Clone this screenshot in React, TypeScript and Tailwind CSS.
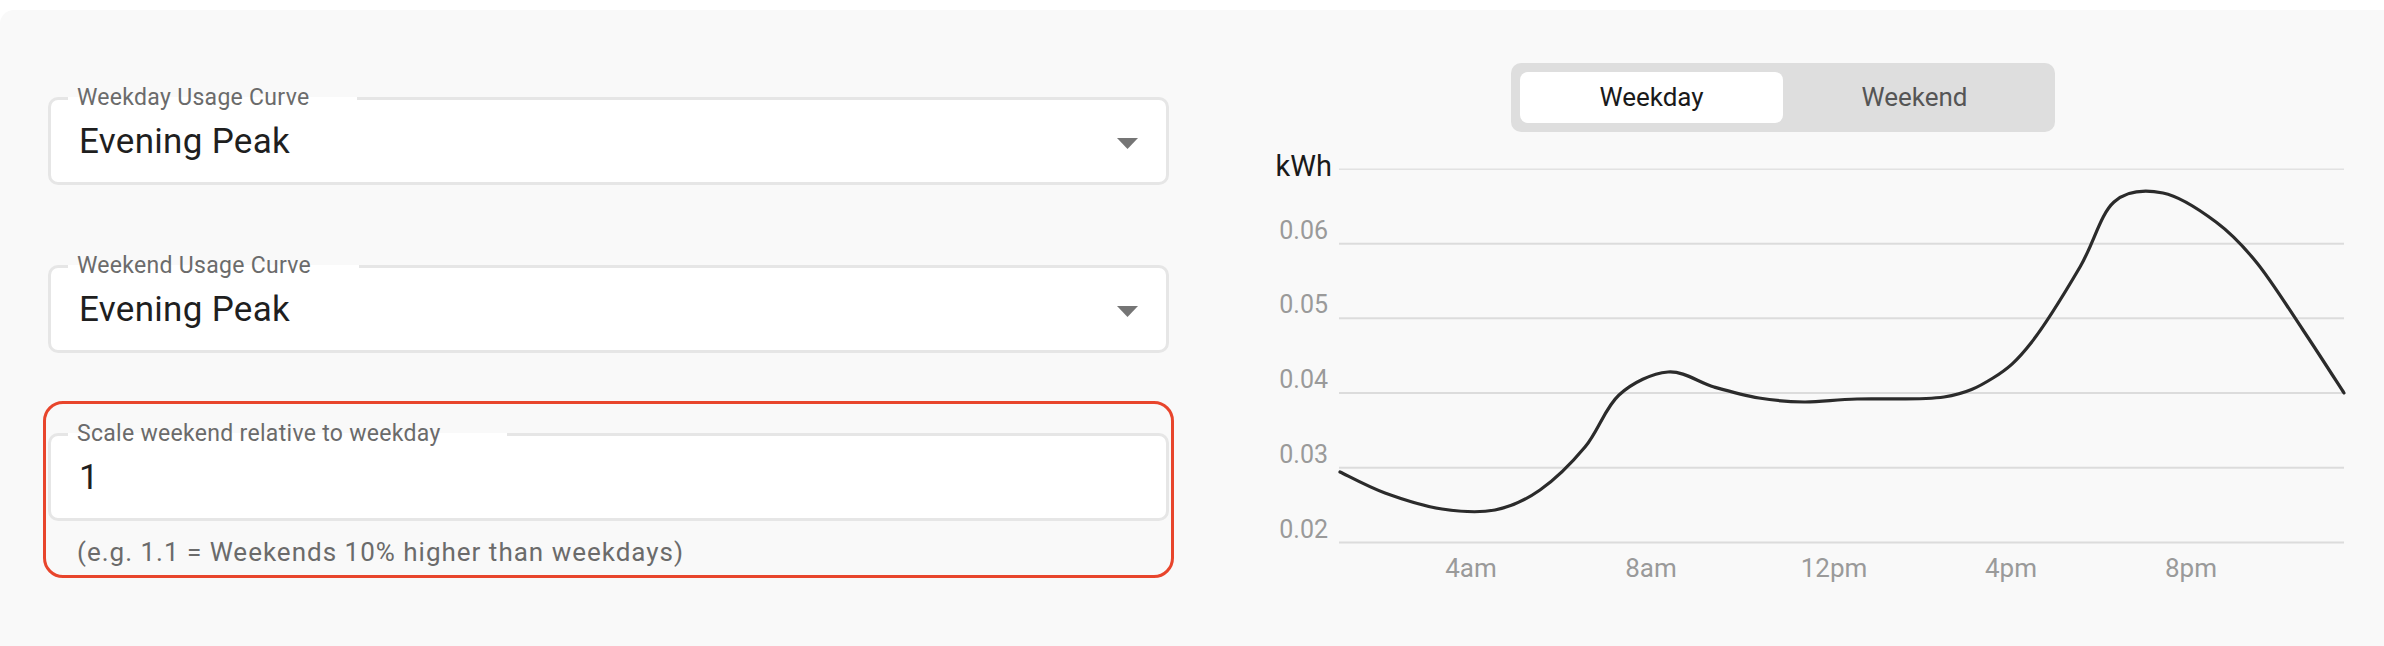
import React from 'react';

const font = { fontFamily: 'Roboto, "Noto Sans", sans-serif' };

// chart svg is placed at x=1222, y=140 of the page
const OX = 1222;
const OY = 140;

const gridYs = [169.3, 243.8, 318.3, 392.9, 467.7, 542.5];
const yLabels = ['kWh', '0.06', '0.05', '0.04', '0.03', '0.02'];
const xTicks = [
  { label: '4am', x: 1471 },
  { label: '8am', x: 1651 },
  { label: '12pm', x: 1834 },
  { label: '4pm', x: 2011 },
  { label: '8pm', x: 2191 },
];

const curve: [number, number][] = [
  [1340, 472], [1385, 493], [1442, 509], [1495, 510],
  [1540, 490], [1585, 447], [1619, 395], [1668, 372], [1714, 387],
  [1759, 398], [1804, 402], [1857, 399], [1944, 397], [1993, 378],
  [2031, 343], [2080, 267], [2114, 202], [2163, 193], [2216, 222],
  [2257, 263], [2303, 330], [2344, 393],
];

function smoothPath(pts: [number, number][]) {
  const p = pts.map(([x, y]) => [x - OX, y - OY]);
  let d = `M${p[0][0]},${p[0][1]}`;
  for (let i = 0; i < p.length - 1; i++) {
    const p0 = p[i - 1] || p[i];
    const p1 = p[i];
    const p2 = p[i + 1];
    const p3 = p[i + 2] || p2;
    const c1x = p1[0] + (p2[0] - p0[0]) / 6;
    const c1y = p1[1] + (p2[1] - p0[1]) / 6;
    const c2x = p2[0] - (p3[0] - p1[0]) / 6;
    const c2y = p2[1] - (p3[1] - p1[1]) / 6;
    d += ` C${c1x.toFixed(1)},${c1y.toFixed(1)} ${c2x.toFixed(1)},${c2y.toFixed(1)} ${p2[0]},${p2[1]}`;
  }
  return d;
}

function Caret() {
  return (
    <svg className="absolute right-[28px] top-[38px]" width="21" height="11" viewBox="0 0 21 11">
      <path d="M0 0 L21 0 L10.5 11 Z" fill="#757575" />
    </svg>
  );
}

function OutlinedField({
  label,
  value,
  notchWidth,
  select,
}: {
  label: string;
  value: string;
  notchWidth: string;
  select?: boolean;
}) {
  return (
    <div className="relative h-[88px] rounded-[10px] border-[3px] border-[#e6e6e6] bg-white flex items-center pl-[28px]">
      {/* notch in the outline behind the label */}
      <div className={`absolute left-[17px] -top-[3px] h-[3px] bg-white ${notchWidth}`} />
      <span className="absolute left-[26px] -top-[14px] text-[23px] leading-none tracking-[0.3px] text-[#6b6b6b] whitespace-nowrap">
        {label}
      </span>
      <span className="text-[35px] leading-none tracking-[0.3px] text-[#1f1f1f]">{value}</span>
      {select && <Caret />}
    </div>
  );
}

function Chart() {
  return (
    <svg width="1162" height="460" className="mt-[8px] block" style={font}>
      {gridYs.map((y, i) => (
        <line
          key={y}
          x1={1339 - OX}
          x2={2344 - OX}
          y1={y - OY}
          y2={y - OY}
          stroke={i === 0 ? '#e2e2e2' : '#dcdcdc'}
          strokeWidth={i === 0 ? 1.5 : 2}
        />
      ))}
      {yLabels.map((t, i) =>
        i === 0 ? (
          <text key={t} x={1332 - OX} y={176 - OY} textAnchor="end" fontSize="29" fill="#1a1a1a">
            {t}
          </text>
        ) : (
          <text key={t} x={1328 - OX} y={gridYs[i] - 5 - OY} textAnchor="end" fontSize="25" fill="#9a9a9a">
            {t}
          </text>
        )
      )}
      {xTicks.map((t) => (
        <text key={t.label} x={t.x - OX} y={577 - OY} textAnchor="middle" fontSize="26" fill="#9a9a9a">
          {t.label}
        </text>
      ))}
      <path d={smoothPath(curve)} fill="none" stroke="#2b2b2b" strokeWidth="3.2" strokeLinejoin="round" strokeLinecap="round" />
    </svg>
  );
}

export default function App() {
  return (
    <div className="w-[2384px] h-[646px] bg-white pt-[10px] overflow-hidden" style={font}>
      <div className="h-[636px] bg-[#f9f9f9] rounded-tl-[14px] flex">
        {/* left column: usage curve inputs */}
        <div className="w-[1222px] pl-[48px] pr-[53px] pt-[87px]">
          <OutlinedField label="Weekday Usage Curve" value="Evening Peak" notchWidth="w-[289px]" select />
          <div className="mt-[80px]">
            <OutlinedField label="Weekend Usage Curve" value="Evening Peak" notchWidth="w-[291px]" select />
          </div>
          <div className="mt-[48px] -mx-[5px] rounded-[20px] border-[3px] border-[#e8452c] px-[2px] pt-[29px] pb-[10px]">
            <OutlinedField label="Scale weekend relative to weekday" value="1" notchWidth="w-[439px]" />
            <p className="mt-[18px] pl-[29px] text-[26px] leading-none tracking-[1px] text-[#6b6b6b]">
              (e.g. 1.1 = Weekends 10% higher than weekdays)
            </p>
          </div>
        </div>

        {/* right column: toggle + chart */}
        <div className="flex-1 flex flex-col">
          <div className="ml-[289px] mt-[53px] w-[544px] h-[69px] rounded-[10px] bg-[#dedede] p-[9px] flex">
            <div className="flex-1 rounded-[8px] bg-white flex items-center justify-center text-[26px] text-[#1a1a1a]">
              Weekday
            </div>
            <div className="flex-1 flex items-center justify-center text-[26px] text-[#555555]">Weekend</div>
          </div>
          <Chart />
        </div>
      </div>
    </div>
  );
}
